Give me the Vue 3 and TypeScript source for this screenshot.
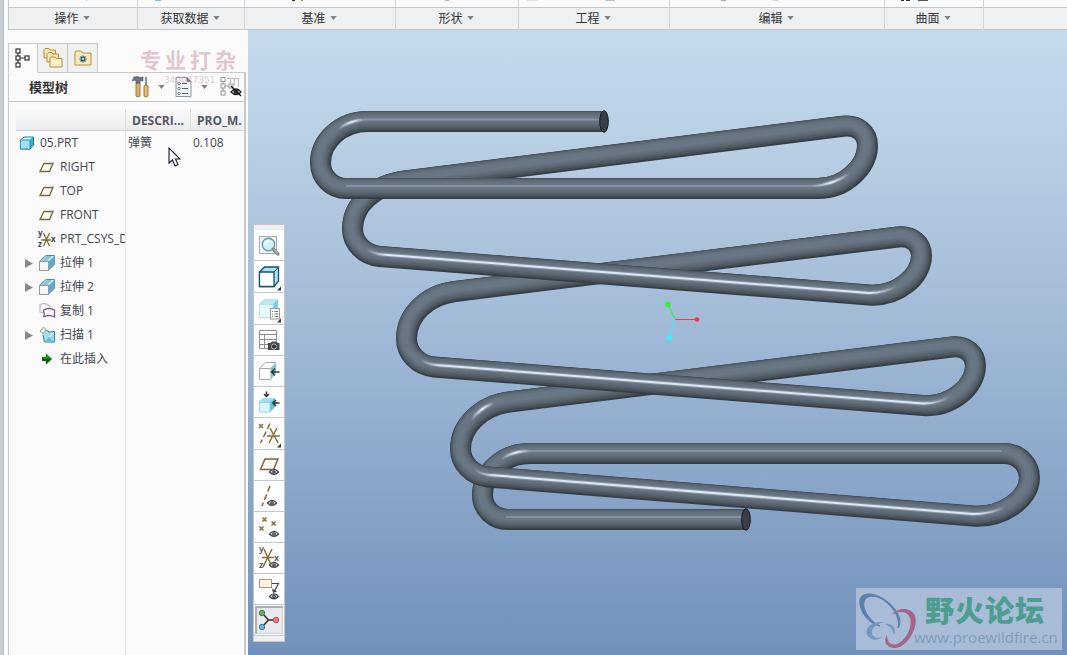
<script setup lang="ts">
interface Mark { x: number; w: number; h: number; c: string }
interface Group { id: string; label: string; marks: Mark[] }
interface Row { name: string; kind: string; open?: boolean; desc?: string; value?: string }

const groups: Group[] = [
  { id: 'ops', label: '操作', marks: [{ x: 77, w: 1, h: 1, c: '#d0d2d4' }] },
  { id: 'data', label: '获取数据', marks: [{ x: 17, w: 6, h: 1, c: '#6cc4e2' }] },
  { id: 'datum', label: '基准', marks: [{ x: 47, w: 3, h: 1, c: '#333333' }, { x: 56, w: 2, h: 1, c: '#b08a40' }] },
  { id: 'shape', label: '形状', marks: [{ x: 49, w: 4, h: 1, c: '#b5b7ba' }] },
  { id: 'eng', label: '工程', marks: [{ x: 8, w: 11, h: 1, c: '#e0e0e0' }, { x: 86, w: 10, h: 1, c: '#c4c4c4' }] },
  { id: 'edit', label: '编辑', marks: [{ x: 51, w: 5, h: 1, c: '#aaaaaa' }, { x: 103, w: 5, h: 1, c: '#cccccc' }] },
  { id: 'surf', label: '曲面', marks: [{ x: 16, w: 3, h: 1, c: '#333333' }, { x: 21, w: 4, h: 1, c: '#333333' }, { x: 33, w: 10, h: 1, c: '#555555' }] },
]

const rows: Row[] = [
  { name: '05.PRT', kind: 'part', desc: '弹簧', value: '0.108' },
  { name: 'RIGHT', kind: 'plane' },
  { name: 'TOP', kind: 'plane' },
  { name: 'FRONT', kind: 'plane' },
  { name: 'PRT_CSYS_D', kind: 'csys' },
  { name: '拉伸 1', kind: 'extrude', open: false },
  { name: '拉伸 2', kind: 'extrude', open: false },
  { name: '复制 1', kind: 'copy' },
  { name: '扫描 1', kind: 'sweep', open: false },
  { name: '在此插入', kind: 'insert' },
]

const tubes: string[] = [
  'M867.5 146C867.5 133 858 124.5 843 126.3L405 181C374 185 352.5 205 352.5 229',
  'M921.5 256C921.5 244 912 235.5 898 237L455 291.5C427 295 406.5 315 406.5 339',
  'M975.5 366C975.5 354 966 345.5 952 347L509 402C481 406 460.5 426 460.5 449',
  'M1029.5 478C1029.5 465 1019 453.5 1004 453.5L530 453.5C504 453.5 482.5 472 482.5 495C482.5 509 494 519.5 508 519.5L746 519.5',
  'M604 121.5L368 121.5C341 121.5 320.5 141 320.5 163C320.5 177 332 188.5 346 188.5L818 188.5C846 188.5 867.5 166 867.5 145.5',
  'M352.5 228.5C352.5 243 364 255 380 256.5L869 295C897 297 921.5 277 921.5 255.5',
  'M406.5 338.5C406.5 353 418 365.5 434 367L923 405.5C951 407.5 975.5 387 975.5 365.5',
  'M460.5 448.5C460.5 463 472 475.5 488 477L973 516C1001 518 1029.5 500 1029.5 477.5',
]

const layers = [
  { w: 21, x: 0, y: 0, c: '#363d44' },
  { w: 19.2, x: -0.5, y: -0.8, c: '#454e57' },
  { w: 17.2, x: -0.9, y: -1.5, c: '#4f5a64' },
  { w: 15, x: -1.2, y: -2, c: '#57636d' },
  { w: 12.6, x: -1.4, y: -2.4, c: '#5e6a76' },
  { w: 9.5, x: -1.5, y: -2.6, c: '#65727e' },
  { w: 6, x: -1.5, y: -2.6, c: '#697683' },
]

const shine = [
  { tube: 3, d: 'M1002 451L530 451', k: 'dull' },
  { tube: 3, d: 'M506 517L742 517', k: 'dull' },
  { tube: 3, d: 'M501 459Q514 450.5 532 451', k: 'spot' },
  { tube: 4, d: 'M600 119.5L364 119.5', k: 'dull' },
  { tube: 4, d: 'M346 186L820 186', k: 'dull' },
  { tube: 4, d: 'M338 129Q350 120 366 119.5', k: 'spot' },
  { tube: 4, d: 'M812 186Q834 185 850 173', k: 'spot' },
  { tube: 5, d: 'M366 249Q374 254 382 254.5L869 293Q885 293 897 286', k: 'line' },
  { tube: 6, d: 'M420 359.500Q428 364.500 436 365L923 403.500Q939 403.500 951 396', k: 'line' },
  { tube: 7, d: 'M474 469.500Q482 474.500 490 475L973 514Q991 514 1005 507', k: 'line' },
  { tube: 2, d: 'M471 420Q480 408 494 403', k: 'spot' },
]

const shineOf = (i: number) => shine.filter((s) => s.tube === i)
</script>

<template>
  <main class="app">
    <header class="ribbon">
      <section v-for="g in groups" :key="g.id" class="group" :class="g.id">
        <svg class="strip" height="7" aria-hidden="true">
          <rect v-for="m in g.marks" :key="m.x" :x="m.x" y="0" :width="m.w" :height="m.h" :fill="m.c" />
        </svg>
        <button class="group-label" type="button">
          {{ g.label }}<svg class="caret" viewBox="0 0 8 5"><path d="M0 0H8L4 5Z" fill="#808284" /></svg>
        </button>
      </section>
      <section class="group rest"><div class="strip" /><div class="group-label" /></section>
    </header>

    <div class="work">
      <aside class="side">
        <nav class="tabs">
          <button type="button" class="tab active" aria-label="模型树">
            <svg width="16" height="20" viewBox="0 0 16 20" fill="#fff" stroke="#333" stroke-width="1.2">
              <path d="M3 5V15M3 10H10" /><rect x="1" y="1" width="4" height="4" /><rect x="1" y="8" width="4" height="4" /><rect x="1" y="15" width="4" height="4" /><rect x="10" y="8" width="4" height="4" />
            </svg>
          </button>
          <button type="button" class="tab" aria-label="文件夹浏览器">
            <svg width="20" height="20" viewBox="0 0 20 20" fill="#f9e6b8" stroke="#b8923f">
              <path d="M1 10V1.500L2 .5H6L7 2H12.500V10Z" /><path d="M4 14V5.500L5 4.500H9L10 6H15.500V14Z" /><path d="M7 19V10L8 9H12L13 10.500H19V19Z" fill="#fff0cb" />
            </svg>
          </button>
          <button type="button" class="tab" aria-label="收藏夹">
            <svg width="18" height="16" viewBox="0 0 18 16">
              <path d="M1 15V2L2 1H7L8.500 3H17V15Z" fill="#fae8ba" stroke="#b8923f" />
              <path d="M9 5.500V12.500M5.500 9H12.500M6.500 6.500L11.500 11.500M11.500 6.500L6.500 11.500" stroke="#15577c" stroke-width="1.200" /><circle cx="9" cy="9" r="1" fill="#fae8ba" />
            </svg>
          </button>
        </nav>

        <section class="panel">
          <div class="title">
            <h2>模型树</h2>
            <button type="button" class="tool hammer" aria-label="设置">
              <svg width="18" height="22" viewBox="0 0 18 22">
                <path d="M4 7H8V20Q6 22 4 20Z" fill="#d9b36c" stroke="#8b642b" stroke-width=".8" />
                <path d="M0 5L2 1Q6 0 8 1.500L11 1V5L8 4.500V7H4V4.500Q2 3.500 0 5Z" fill="#6c7881" stroke="#424b52" stroke-width=".6" />
                <path d="M13 1H15V9H13Z" fill="#87949c" /><path d="M12 10Q14 8 16 10V20Q14 22 12 20Z" fill="#e0bd70" stroke="#8b642b" stroke-width=".8" />
              </svg>
            </button>
            <svg class="caret drop-one" viewBox="0 0 8 5"><path d="M0 0H8L4 5Z" fill="#808284" /></svg>
            <button type="button" class="tool doc" aria-label="显示">
              <svg width="17" height="20" viewBox="0 0 17 20">
                <path d="M1 .5H12L16 4.500V19.500H1Z" fill="#eef4f8" stroke="#8b98a2" /><path d="M12 .5V4.500H16" fill="#58656e" stroke="#6d7980" />
                <path d="M7 6.500H12M7 11.500H13M7 16.500H13" stroke="#56616a" /><g fill="#fff" stroke="#59646b" stroke-width=".8"><circle cx="4" cy="6.500" r="1.200" /><circle cx="4" cy="11.500" r="1.200" /><circle cx="4" cy="16.500" r="1.200" /></g>
              </svg>
            </button>
            <svg class="caret drop-two" viewBox="0 0 8 5"><path d="M0 0H8L4 5Z" fill="#808284" /></svg>
            <button type="button" class="tool" aria-label="隐藏树列">
              <svg width="22" height="22" viewBox="0 0 22 22">
                <g fill="#fbfbfc" stroke="#999" stroke-width="1"><path d="M3 4V16M3 10H9" /><path d="M7 2.500H10.500V7M11 2.500H14.500V9M15 2.500H18.500V11" fill="none" stroke="#bbb" /><rect x="1" y="1.500" width="4" height="4" /><rect x="1" y="8" width="4" height="4" /><rect x="1" y="15" width="4" height="4" /><rect x="9" y="8" width="4" height="4" /></g>
                <path d="M11 16Q16 10 21 16Q16 21 11 16Z" fill="#fff" stroke="#222" stroke-width="1.300" /><circle cx="16" cy="16" r="2.500" fill="#333" /><path d="M11 10L21 20" stroke="#111" stroke-width="1.200" />
              </svg>
            </button>
          </div>

          <div class="tree-area">
            <table class="tree">
              <colgroup><col class="c-name"><col class="c-desc"><col></colgroup>
              <thead><tr><th aria-label="名称" /><th>DESCRI...</th><th>PRO_M.</th></tr></thead>
              <tbody>
                <tr v-for="(r, i) in rows" :key="i">
                  <td>
                    <div class="node" :class="{ root: r.kind === 'part' }">
                      <button v-if="r.open === false" type="button" class="expander" :aria-label="'展开 ' + r.name"><svg width="8" height="9" viewBox="0 0 8 9"><path d="M0 0L8 4.500L0 9Z" fill="#898989" /></svg></button>
                      <span v-else-if="r.kind !== 'part'" class="expander" />
                      <svg v-if="r.kind === 'part'" class="icon" viewBox="0 0 16 16"><path d="M.5 5L4 2H13.500V10L10 14H.5Z" fill="#3faed4" stroke="#24799b" /><path d="M.5 5H10V14H.5Z" fill="#9be5f7" stroke="#2d8fb3" /><path d="M1.500 4.500L4.500 2.500H12.500L10 4.500Z" fill="#c8f3fc" /></svg>
                      <svg v-else-if="r.kind === 'plane'" class="icon" viewBox="0 0 16 16"><path d="M5 4.500H14L10.500 12.500H1Z" fill="none" stroke="#7d6733" stroke-width="1.300" /></svg>
                      <svg v-else-if="r.kind === 'csys'" class="icon" viewBox="0 0 16 16"><path d="M2 9H12M4.500 2L10.500 15M10.500 2L4.500 15" fill="none" stroke="#806a35" stroke-width="1.300" /><g class="axis"><text x="-1" y="5">y</text><text x="-1" y="16">z</text><text x="12" y="11">x</text></g></svg>
                      <svg v-else-if="r.kind === 'extrude'" class="icon" viewBox="0 0 16 16"><path d="M.5 6.500L7 .5H15.500V9.500L9 15.500Z" fill="#c5e8f3" stroke="#4f8ca6" /><path d="M9.500 6.500L15.500 1V9.500L9.500 15Z" fill="#62abc8" /><path d="M8 1L13 1L8 6H2Z" fill="#85c5dc" /><rect x=".5" y="6.500" width="9" height="9" fill="#f5f5f5" stroke="#999" /></svg>
                      <svg v-else-if="r.kind === 'copy'" class="icon" viewBox="0 0 16 16"><path d="M5 10L1 9V2Q5-1 11 3V6" fill="none" stroke="#bbb" stroke-width="1.200" /><path d="M4.500 14Q6 12 4.500 7Q10 4 15.500 7V14Q10 11 4.500 14Z" fill="#faf8ff" stroke="#7d55a0" stroke-width="1.300" /></svg>
                      <svg v-else-if="r.kind === 'sweep'" class="icon" viewBox="0 0 16 16"><path d="M4 2L10 5L15.500 4.500V15H6L4 9L1 4Z" fill="#a5ddee" /><path d="M6 2L10 5L15.500 4.500V15H5.500L4 8" fill="none" stroke="#2b82a7" /><path d="M6 6L10 10L15 15H6L10 10Z" fill="#6bbcd6" /><path d="M15 5L10 10" stroke="#e9f8fc" /><path d="M4.500 0L7 3L4 6.500L1 4Z" fill="#fff" stroke="#999" /></svg>
                      <svg v-else class="icon" viewBox="0 0 16 16"><path d="M3 6H7V2.500L13 8L7 13.500V10H3Z" fill="#085f08" /><path d="M4 7H8V5L11 8" fill="none" stroke="#10a510" stroke-width="1.300" /></svg>
                      <span>{{ r.name }}</span>
                    </div>
                  </td>
                  <td>{{ r.desc }}</td>
                  <td>{{ r.value }}</td>
                </tr>
              </tbody>
            </table>
            <div class="column-rule" />
          </div>
        </section>

        <div class="stamp" aria-hidden="true">
          <div class="stamp-name"><span>专</span><span>业</span><span>打</span><span>杂</span></div>
          <div class="stamp-num">340047351</div>
        </div>
        <svg class="pointer" width="13" height="20" viewBox="0 0 13 20" aria-hidden="true"><path d="M1 1V16L4.500 13L7 19L10 17.500L7.500 12H12Z" fill="#fff" stroke="#1a1a2c" stroke-width="1.100" /></svg>
      </aside>

      <section class="viewport">
        <svg class="scene" viewBox="248 30 819 625" preserveAspectRatio="xMidYMid meet" role="img" aria-label="弹簧模型">
          <defs>
            <linearGradient id="spot-core"><stop offset="0" stop-color="#e3ecf6" stop-opacity="0" /><stop offset=".5" stop-color="#e3ecf6" /><stop offset="1" stop-color="#e3ecf6" stop-opacity="0" /></linearGradient>
            <linearGradient id="spot-halo"><stop offset="0" stop-color="#93a1b0" stop-opacity="0" /><stop offset=".5" stop-color="#93a1b0" /><stop offset="1" stop-color="#93a1b0" stop-opacity="0" /></linearGradient>
            <linearGradient id="line-core"><stop offset="0" stop-color="#dde7f3" stop-opacity="0" /><stop offset=".04" stop-color="#dde7f3" /><stop offset=".95" stop-color="#dde7f3" /><stop offset="1" stop-color="#dde7f3" stop-opacity="0" /></linearGradient>
            <linearGradient id="line-halo"><stop offset="0" stop-color="#8996a5" stop-opacity="0" /><stop offset=".04" stop-color="#8996a5" /><stop offset=".95" stop-color="#8996a5" /><stop offset="1" stop-color="#8996a5" stop-opacity="0" /></linearGradient>
          </defs>
          <g v-for="(t, i) in tubes" :key="i" fill="none">
            <path v-for="(l, k) in layers" :key="k" :d="t" :stroke="l.c" :stroke-width="l.w" :transform="`translate(${l.x} ${l.y})`" />
            <template v-for="(s, k) in shineOf(i)" :key="'s' + k">
              <path v-if="s.k === 'dull'" :d="s.d" stroke="#8491a0" stroke-width="2" />
              <template v-else>
                <path :d="s.d" :stroke="`url(#${s.k}-halo)`" stroke-width="4" />
                <path :d="s.d" :stroke="`url(#${s.k}-core)`" stroke-width="2" />
              </template>
            </template>
          </g>
          <ellipse cx="604" cy="121.500" rx="4.300" ry="10.800" class="end" />
          <ellipse cx="746" cy="519.500" rx="4.300" ry="10.800" class="end" />
          <path d="M675 319.500L668 304" stroke="#37ed37" /><circle cx="668" cy="304.500" r="2.800" fill="#2ff52f" />
          <path d="M675 319.500H697" stroke="#f23a44" /><circle cx="697" cy="319.500" r="2.300" fill="#f23a44" />
          <path d="M675 319.500L669 338" stroke="#2ff4fb" /><circle cx="669.500" cy="338" r="2.800" fill="#2ff4fb" />
        </svg>

        <div class="viewbar" role="toolbar" aria-label="视图">
          <svg class="defs" width="0" height="0" aria-hidden="true">
            <symbol id="eye" viewBox="0 0 12 8" overflow="visible"><path d="M.5 4Q6-2.500 11.500 4Q6 9.500 .5 4Z" fill="#e8e8e8" stroke="#40444a" stroke-width="1.500" /><circle cx="6" cy="4" r="2.200" fill="#33373c" /><circle cx="6" cy="4" r=".7" fill="#fff" /></symbol>
          </svg>
          <div class="grip" />
          <button type="button" aria-label="重新调整"><svg viewBox="0 0 30 30"><rect x="5.500" y="6.500" width="17" height="17" fill="#f3f3f3" stroke="#aaa" /><circle cx="14.500" cy="14.500" r="6.200" fill="#d2f0fa" stroke="#5b9cb6" stroke-width="1.400" /><path d="M11 14Q12 10.500 16 11" fill="none" stroke="#fff" stroke-width="2" /><path d="M19 19L24 24" stroke="#888" stroke-width="3.200" stroke-linecap="round" /><path d="M20 19.500L24 23.500" stroke="#ddd" /></svg></button>
          <button type="button" class="menu" aria-label="显示样式"><svg viewBox="0 0 30 30"><path d="M5.500 10L10.500 5H24.500V19L20 24.500H5.500Z" fill="#a9e3f3" stroke="#14526d" stroke-width="1.300" /><path d="M5.500 10H20V24.500H5.500Z" fill="#fff" stroke="#14526d" stroke-width="1.300" /><path d="M20 10L24.500 5" stroke="#14526d" /><path d="M27 24.500V28.500H23Z" fill="#333" /></svg></button>
          <button type="button" class="menu" aria-label="已保存方向"><svg viewBox="0 0 30 30"><path d="M5 10L10 5.500H24V18L19 23H5Z" fill="#7bcce2" /><path d="M5 10L10 5.500H24L19 10Z" fill="#b9e8f4" /><path d="M5.500 10.500H19V23.500H5.500Z" fill="#e9f9fd" stroke="#b7e3ee" /><rect x="16.500" y="14.500" width="9" height="10.500" fill="#fff" stroke="#999" /><path d="M18 17.500H19M20.500 17.500H24M18 20H19M20.500 20H24M18 22.500H19M20.500 22.500H24" stroke="#777" /><path d="M27 24.500V28.500H23Z" fill="#333" /></svg></button>
          <button type="button" aria-label="视图管理器"><svg viewBox="0 0 30 30"><path d="M5.500 5.500H22.500V23.500H5.500ZM5 9.500H23M5 14.500H23M5 19.500H23M10.500 9.500V23" fill="#fff" stroke="#8d8d8d" /><path d="M14 18H16.500L18 16.500H22L23.500 18H25.500V25H14Z" fill="#44484d" /><circle cx="20" cy="21.500" r="2.600" fill="#303338" stroke="#bbb" /></svg></button>
          <button type="button" aria-label="剖面"><svg viewBox="0 0 30 30"><path d="M5.500 12.500L11 6.500H22L17 12.500Z" fill="#fff" stroke="#aaa" /><path d="M17 12.500L22 7V17L17 23Z" fill="#72cce2" /><path d="M5.500 12.500H17V23.500H5.500Z" fill="#fff" stroke="#aaa" /><path d="M25.500 16H18M21 12.500L17.500 16L21 19.500" fill="none" stroke="#333" stroke-width="1.500" /></svg></button>
          <button type="button" aria-label="多方向剖面"><svg viewBox="0 0 30 30"><path d="M5 15L9.500 11H21V20L16 25H5Z" fill="#60bdd8" /><path d="M5 15L9.500 11H21L16 15Z" fill="#9ce0ef" /><path d="M5.500 15.500H16V25H5.500Z" fill="#d7f6fd" stroke="#94d5e5" /><path d="M12.500 4.500V9M10 7L12.500 9.500L15 7M25.500 16H19.500M22 13L19 16L22 19" fill="none" stroke="#333" stroke-width="1.500" /></svg></button>
          <button type="button" class="menu" aria-label="基准显示过滤器"><svg viewBox="0 0 30 30"><g fill="none" stroke="#8b6c34" stroke-width="1.500"><path d="M5 5L9 9M9 5L5 9" /><path d="M16 4.500L6.500 24" stroke-dasharray="6 3" /><path d="M13 17H26M16 9L24 24M23 9L15 24" /></g><path d="M27 24.500V28.500H23Z" fill="#333" /></svg></button>
          <button type="button" aria-label="平面显示"><svg viewBox="0 0 30 30"><path d="M11 9H24L19.500 19.500H6.500Z" fill="none" stroke="#7f6430" stroke-width="1.500" /><use href="#eye" x="15" y="18.500" width="10" height="7" /></svg></button>
          <button type="button" aria-label="轴显示"><svg viewBox="0 0 30 30"><path d="M16 5L8 25" fill="none" stroke="#8b6c34" stroke-width="1.600" stroke-dasharray="6 3" /><use href="#eye" x="13" y="18.500" width="10" height="7" /></svg></button>
          <button type="button" aria-label="点显示"><svg viewBox="0 0 30 30"><path d="M8.500 5.500L12.500 9.500M12.500 5.500L8.500 9.500M17.500 9.500L21.500 13.500M21.500 9.500L17.500 13.500M5.500 14.500L9.500 18.500M9.500 14.500L5.500 18.500" stroke="#8b6c34" stroke-width="1.500" /><use href="#eye" x="15" y="18.500" width="10" height="7" /></svg></button>
          <button type="button" aria-label="坐标系显示"><svg viewBox="0 0 30 30"><path d="M8 14.500H20M10 6L18 24M18 6L9 24" stroke="#8b6c34" stroke-width="1.500" /><g class="axis big"><text x="5" y="9">y</text><text x="5" y="25">z</text><text x="20" y="18">x</text></g><use href="#eye" x="15" y="18.500" width="10" height="7" /></svg></button>
          <button type="button" aria-label="注释显示"><svg viewBox="0 0 30 30"><path d="M17.500 9.500H24.500L20.500 17" fill="none" stroke="#444" stroke-width="1.200" /><path d="M18 14.500L19 19L23 17.500Z" fill="#444" /><rect x="5.500" y="5.500" width="12" height="8" fill="#fff5e2" stroke="#a19683" /><use href="#eye" x="15" y="19" width="10" height="7" /></svg></button>
          <button type="button" class="pressed" aria-label="旋转中心"><svg viewBox="0 0 30 30"><path d="M8 8L14.500 15H22M14.500 15L8 22" fill="none" stroke="#333" stroke-width="1.600" /><circle cx="8" cy="8" r="2.700" fill="#6cae5d" stroke="#4a8343" /><circle cx="22" cy="15" r="2.700" fill="#ef7a7a" stroke="#b94a4a" /><circle cx="8" cy="22" r="2.700" fill="#67b9d8" stroke="#367fa0" /></svg></button>
          <div class="grip" />
        </div>

        <div class="forum">
          <svg class="forum-logo" width="60" height="60" viewBox="0 0 60 60" aria-hidden="true">
            <path fill-rule="evenodd" d="M3 14C1 3 13 1 25 8C38 15 47 30 41 38C44 26 32 11 20 7C10 4 4 10 8 20C12 30 19 34 23 36C12 34 4 23 3 14Z" fill="#5a80ad" stroke="#5a80ad" />
            <path d="M27 32C11 31 6 42 12 47C16 51 22 50 25 47C19 49 14 46 15 41C16 36 21 34 27 32Z" fill="#7596bd" />
            <path d="M34 25C42 17 54 17 58 26C62 38 49 59 36 58C29 57 26 51 30 45C30 52 34 56 40 54C50 50 57 34 52 26C48 20 41 22 34 25Z" fill="#a46688" />
            <path d="M28 34C34 33 40 37 37 45C36 39 33 36 28 34Z" fill="#7596bd" />
          </svg>
          <div class="forum-text">
            <strong><span>野</span><span>火</span><span>论</span><span>坛</span></strong>
            <a href="#">www.proewildfire.cn</a>
          </div>
        </div>
      </section>
    </div>
  </main>
</template>

<style>
html, body { margin: 0; }
</style>

<style scoped>
* { box-sizing: border-box; }
.app {
  min-height: 100vh;
  display: flex;
  flex-direction: column;
  padding-left: 8px;
  background: linear-gradient(to right, #c9ced3 0 3px, #b9bec3 3px 4px, #fbfbfc 4px);
  font: 12px/16px "Open Sans", "Noto Sans CJK SC", sans-serif;
  color: #44464e;
  overflow: hidden;
}
button { padding: 0; margin: 0; border: 0; background: none; font: inherit; color: inherit; }
svg { display: block; flex: none; }

.ribbon { display: flex; border-left: 1px solid #c6c9cc; }
.group { display: flex; flex-direction: column; flex: none; border-right: 1px solid #d3d5d8; }
.ops { width: 129px; }
.data { width: 107px; }
.datum { width: 151px; }
.shape { width: 123px; }
.eng { width: 151px; }
.edit { width: 215px; }
.surf { width: 99px; }
.rest { flex: 1; border-right: 0; }
.strip { height: 7px; width: 100%; }
.group-label {
  display: flex; align-items: center; justify-content: center; gap: 4px;
  height: 23px; padding: 0 2px 2px 0; background: #eff0f2; border-top: 1px solid #c3c7ca; border-bottom: 1px solid #c3c7ca;
  font-family: "Noto Sans CJK SC", sans-serif; color: #333;
}
.caret { width: 7px; height: 4px; }

.work { flex: 1; display: flex; }
.side { position: relative; width: 240px; flex: none; padding-top: 13px; display: flex; flex-direction: column; }
.tabs { display: flex; position: relative; z-index: 1; }
.tab {
  width: 30px; height: 30px; display: grid; place-items: center;
  border: 1px solid #c6c9cc; border-left-width: 0; background: #eff0f2;
}
.tab.active { background: #fbfbfc; border-left-width: 1px; border-bottom-color: #fbfbfc; }
.panel { flex: 1; display: flex; flex-direction: column; margin: -1px 2px 0 0; border: 1px solid #c6c9cc; border-right: 2px solid #c6cacd; border-bottom: 0; }
.title { display: flex; align-items: center; height: 29px; padding: 0 2px 0 20px; border-bottom: 1px solid #c6c9cc; }
.title h2 { margin: 0 auto 0 0; font-size: 13px; font-weight: 700; color: #333; }
.drop-one { margin: 0 10px 0 8px; }
.drop-two { margin: 0 12px 0 9px; }

.tree-area { flex: 1; display: flex; flex-direction: column; margin: 7px 1px 0 7px; }
.column-rule { flex: 1; width: 110px; border-right: 1px solid #e3e5e8; }
.tree { width: 100%; table-layout: fixed; border-collapse: separate; border-spacing: 0; }
.c-name { width: 110px; }
.c-desc { width: 65px; }
.tree th {
  height: 22px; padding: 2px 0 0 6px; text-align: left; font-weight: 700; white-space: nowrap; overflow: hidden;
  color: #55585f; background: linear-gradient(#fafafb, #eaebed); border-bottom: 1px solid #cdcfd2; border-right: 1px solid #dcdee0;
}
.tree th:last-child { border-right: 0; }
.tree td { height: 24px; padding: 0 0 0 2px; white-space: nowrap; overflow: hidden; }
.tree td:first-child { padding: 0; border-right: 1px solid #e3e5e8; }
.node { display: flex; align-items: center; gap: 5px; padding-left: 9px; }
.node.root { padding-left: 4px; gap: 4px; }
.expander { flex: none; width: 9px; }
.icon { width: 16px; height: 16px; overflow: visible; }
.axis { font: 700 8px "Open Sans", sans-serif; fill: #444; }
.axis.big { font-size: 9px; font-weight: 600; }

.stamp { position: absolute; left: 132px; top: 16px; color: #cfa5b0; opacity: .6; pointer-events: none; }
.stamp-name { display: flex; gap: 4px; font: 700 21px/27px "Noto Sans CJK SC", sans-serif; }
.stamp-num { padding-left: 24px; font: 9px/14px "DejaVu Sans", sans-serif; }
.pointer { position: absolute; left: 160px; top: 117px; }

.viewport { position: relative; flex: 1; background: linear-gradient(#c5dbeb, #b1c7df 29%, #a2bbd7 46%, #7191bb); }
.scene { position: absolute; inset: 0; width: 100%; height: 100%; }
.end { fill: #383f47; stroke: #15181b; stroke-width: 1; }

.viewbar { position: absolute; left: 5px; top: 194px; width: 32px; border: 1px solid #c3c8cd; background: #fff; }
.defs { position: absolute; }
.grip { height: 5px; background: #eff0f2; }
.viewbar button { display: block; width: 100%; height: 31px; border-bottom: 1px solid #c3c8cd; }
.viewbar .menu { height: 32px; }
.viewbar button svg { width: 30px; height: 30px; }
.viewbar .pressed { background: #e8eaec; box-shadow: inset 0 0 0 1px #fff, inset 2px 2px 0 1px #adb1b5, inset -2px -2px 0 0 #cfd2d5; }

.forum { position: absolute; right: 5px; bottom: 5px; width: 206px; height: 62px; display: flex; background: #a9bcd7; }
.forum-logo { margin: 2px 0 0 1px; }
.forum-text { flex: 1; margin-left: -3px; white-space: nowrap; }
.forum-text strong { display: flex; gap: 1px; padding-left: 11px; font: 900 29px/42px "Noto Sans CJK SC", sans-serif; color: #4b9e90; }
.forum-text a { display: block; font-size: 15px; line-height: 14px; color: #789fba; text-decoration: none; }
</style>
